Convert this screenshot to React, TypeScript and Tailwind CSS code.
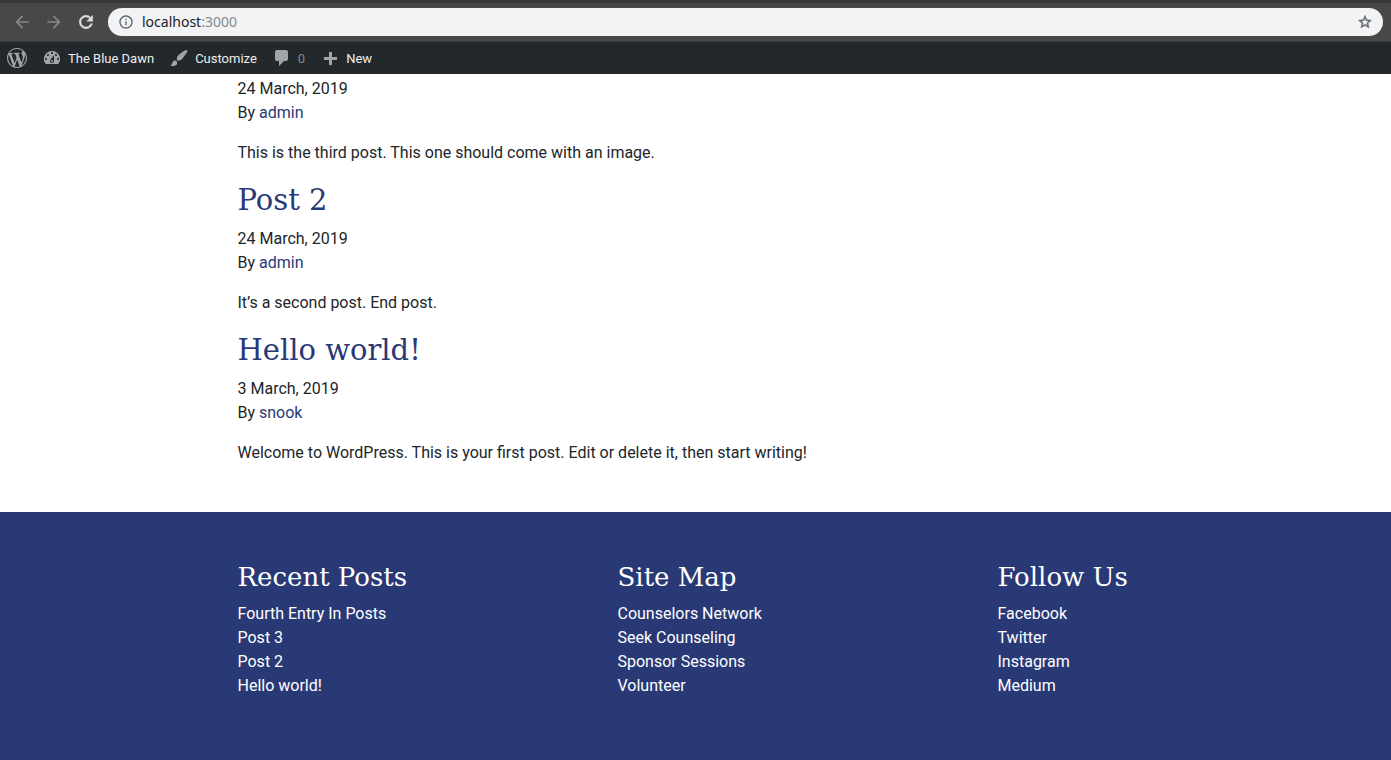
import type { ReactNode } from 'react';
import { MdArrowBack, MdArrowForward, MdInfoOutline } from 'react-icons/md';

const icons = {
  wordpress:
    'M20 10c0-5.51-4.49-10-10-10C4.48 0 0 4.49 0 10c0 5.52 4.48 10 10 10 5.51 0 10-4.48 10-10zM7.78 15.37L4.37 6.22c.55-.02 1.17-.08 1.17-.08.5-.06.44-1.13-.06-1.11 0 0-1.45.11-2.37.11-.18 0-.37 0-.58-.01C4.12 2.69 6.87 1.11 10 1.11c2.33 0 4.45.87 6.05 2.34-.68-.11-1.65.39-1.65 1.58 0 .74.45 1.36.9 2.1.35.61.55 1.36.55 2.46 0 1.49-1.4 5-1.4 5l-3.03-8.37c.54-.02.82-.17.82-.17.5-.05.44-1.25-.06-1.22 0 0-1.44.12-2.38.12-.87 0-2.33-.12-2.33-.12-.5-.03-.56 1.2-.06 1.22l.92.08 1.26 3.41zM17.41 10c.24-.64.74-1.87.43-4.25.7 1.29 1.05 2.71 1.05 4.25 0 3.29-1.73 6.24-4.4 7.78.97-2.59 1.94-5.2 2.92-7.78zM6.1 18.09C3.12 16.65 1.11 13.53 1.11 10c0-1.3.23-2.48.72-3.59C3.25 10.3 4.67 14.2 6.1 18.09zm4.03-6.63l2.58 6.98c-.86.29-1.76.45-2.71.45-.79 0-1.57-.11-2.29-.33.81-2.38 1.62-4.74 2.42-7.1z',
  dashboard:
    'M3.76 16h12.48A7.998 7.998 0 0 0 10 3a7.998 7.998 0 0 0-6.24 13zM10 4c.55 0 1 .45 1 1s-.45 1-1 1-1-.45-1-1 .45-1 1-1zM6 6c.55 0 1 .45 1 1s-.45 1-1 1-1-.45-1-1 .45-1 1-1zm8 0c.55 0 1 .45 1 1s-.45 1-1 1-1-.45-1-1 .45-1 1-1zm-5.37 5.55L12 7v6c0 1.1-.9 2-2 2s-2-.9-2-2c0-.57.24-1.08.63-1.45zM4 10c.55 0 1 .45 1 1s-.45 1-1 1-1-.45-1-1 .45-1 1-1zm12 0c.55 0 1 .45 1 1s-.45 1-1 1-1-.45-1-1 .45-1 1-1zm-5 3c0-.55-.45-1-1-1s-1 .45-1 1 .45 1 1 1 1-.45 1-1z',
  brush:
    'M18.33 3.57s.27-.8-.31-1.36c-.53-.52-1.22-.24-1.22-.24-.61.3-5.76 3.47-7.67 5.57-.86.96-2.06 3.79-1.09 4.82.92.98 3.96-.17 4.79-1 2.06-2.06 5.21-7.17 5.5-7.79zM1.4 17.65c2.37-1.56 1.46-3.41 3.23-4.64.93-.65 2.22-.62 3.08.29.63.67.8 2.57-.16 3.46-1.57 1.45-4 1.55-6.15.89z',
  comment:
    'M5 2h9c1.1 0 2 .9 2 2v7c0 1.1-.9 2-2 2h-2l-5 5v-5H5c-1.1 0-2-.9-2-2V4c0-1.1.9-2 2-2z',
  plus: 'M17 9v3h-5v5H9v-5H4V9h5V4h3v5h5z',
};

function Glyph({ name }: { name: keyof typeof icons }) {
  return (
    <svg viewBox="0 0 20 20" className="size-5 shrink-0 fill-[#a0a5aa]" fillRule="evenodd" aria-hidden="true">
      <path d={icons[name]} />
    </svg>
  );
}

function ReloadIcon() {
  return (
    <svg viewBox="0 0 24 24" className="size-5 fill-current stroke-current" strokeWidth={0.6} aria-hidden="true">
      <path d="M17.65 6.35C16.2 4.9 14.21 4 12 4c-4.42 0-7.99 3.58-7.99 8s3.57 8 7.99 8c3.73 0 6.84-2.55 7.73-6h-2.08c-.82 2.33-3.04 4-5.65 4-3.31 0-6-2.69-6-6s2.69-6 6-6c1.66 0 3.14.69 4.22 1.78L13 11h7V4l-2.35 2.35z" />
    </svg>
  );
}

function StarIcon() {
  return (
    <svg viewBox="0 0 24 24" className="size-4 fill-current stroke-current" strokeWidth={0.6} aria-hidden="true">
      <path d="M22 9.24l-7.19-.62L12 2 9.19 8.63 2 9.24l5.46 4.73L5.82 21 12 17.27 18.18 21l-1.63-7.03L22 9.24zM12 15.4l-3.76 2.27 1-4.28-3.32-2.88 4.38-.38L12 6.1l1.71 4.04 4.38.38-3.32 2.88 1 4.28L12 15.4z" />
    </svg>
  );
}

function BrowserBar() {
  return (
    <header className="flex h-[42px] items-center border-t-[3px] border-b border-t-[#383838] border-b-[#3d3d3d] bg-[#484848] pr-2 pl-3">
      <div className="flex items-center gap-3 pr-3 text-[20px] text-[#868686]">
        <button type="button" aria-label="Back"><MdArrowBack /></button>
        <button type="button" aria-label="Forward"><MdArrowForward /></button>
        <button type="button" aria-label="Reload" className="text-[#dedede]"><ReloadIcon /></button>
      </div>
      <div className="flex h-7 flex-1 items-center rounded-full bg-[#f1f3f4] px-[10px] font-['Noto_Sans',sans-serif] text-sm text-[#5f6368]">
        <MdInfoOutline className="size-4" />
        <a href="#top" className="ml-2 flex-1 text-[#202124]">
          localhost<span className="text-[#85898d]">:3000</span>
        </a>
        <button type="button" aria-label="Bookmark this page"><StarIcon /></button>
      </div>
    </header>
  );
}

function AdminItem({ icon, children }: { icon: keyof typeof icons; children: ReactNode }) {
  return (
    <a href="#admin" className="flex items-center gap-[6px]">
      <Glyph name={icon} />
      {children}
    </a>
  );
}

function AdminBar() {
  return (
    <nav aria-label="Admin" className="flex h-8 items-center gap-[15px] bg-[#23282d] px-[7px] text-[13px] leading-[25px] text-[#eeeeee]">
      <a href="#wordpress" aria-label="WordPress"><Glyph name="wordpress" /></a>
      <AdminItem icon="dashboard">The Blue Dawn</AdminItem>
      <AdminItem icon="brush">Customize</AdminItem>
      <AdminItem icon="comment"><span className="text-[#82878c]">0</span></AdminItem>
      <AdminItem icon="plus">New</AdminItem>
    </nav>
  );
}

type PostProps = { title?: string; date: string; author: string; text: string };

const posts: PostProps[] = [
  { date: '24 March, 2019', author: 'admin', text: 'This is the third post. This one should come with an image.' },
  { title: 'Post 2', date: '24 March, 2019', author: 'admin', text: 'It’s a second post. End post.' },
  { title: 'Hello world!', date: '3 March, 2019', author: 'snook', text: 'Welcome to WordPress. This is your first post. Edit or delete it, then start writing!' },
];

function Post({ title, date, author, text }: PostProps) {
  return (
    <article className="mb-4">
      {title && (
        <h2 className="mb-[7px] font-['Roboto_Slab','DejaVu_Serif',serif] text-[29px] leading-[39px] text-[#293975]">
          <a href="#post">{title}</a>
        </h2>
      )}
      <p>{date}</p>
      <p>By <a href="#author" className="text-[#293975]">{author}</a></p>
      <p className="mt-4">{text}</p>
    </article>
  );
}

const columns = [
  { title: 'Recent Posts', links: ['Fourth Entry In Posts', 'Post 3', 'Post 2', 'Hello world!'] },
  { title: 'Site Map', links: ['Counselors Network', 'Seek Counseling', 'Sponsor Sessions', 'Volunteer'] },
  { title: 'Follow Us', links: ['Facebook', 'Twitter', 'Instagram', 'Medium'] },
];

export default function App() {
  return (
    <div className="flex min-h-screen flex-col bg-white font-[Roboto,sans-serif] text-base text-[#212529]">
      <BrowserBar />
      <AdminBar />
      <main className="mx-auto w-full max-w-[1140px] pt-[3px] pb-[31px] pl-28">
        {posts.map((post) => <Post key={post.text} {...post} />)}
      </main>
      <footer className="flex-1 bg-[#293975] pt-12 pb-12 text-white">
        <div className="mx-auto grid max-w-[1140px] grid-cols-3">
          {columns.map(({ title, links }) => (
            <section key={title} className="pl-28">
              <h3 className="mb-2 font-['Roboto_Slab','DejaVu_Serif',serif] text-[26px] leading-[34px] whitespace-nowrap">{title}</h3>
              <ul>
                {links.map((link) => <li key={link}><a href="#link">{link}</a></li>)}
              </ul>
            </section>
          ))}
        </div>
      </footer>
    </div>
  );
}
